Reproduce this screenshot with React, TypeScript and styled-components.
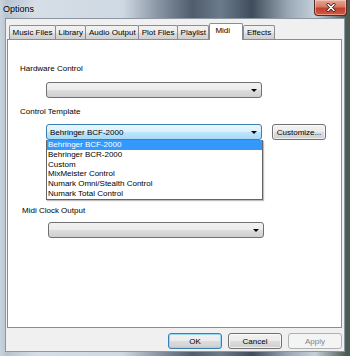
import styled, { createGlobalStyle, css } from "styled-components";

const GlobalStyle = createGlobalStyle`
  html, body {
    margin: 0;
    padding: 0;
    background: #5b6876;
  }
  * {
    box-sizing: border-box;
  }
`;

const Window = styled.div`
  width: 350px;
  height: 356px;
  display: flex;
  flex-direction: column;
  font-family: "Liberation Sans", Arial, sans-serif;
  font-size: 8px;
  color: #000;
  background: linear-gradient(
    90deg,
    #c9d4de 0%,
    #b7c3cf 2%,
    #d5dee7 10%,
    #cfd9e3 35%,
    #8996a4 45%,
    #4f5d6c 55%,
    #6c7b8b 63%,
    #3f4d5b 72%,
    #98a6b4 82%,
    #c5d0db 90%,
    #4d5a52 99%
  );
  overflow: hidden;
`;

const TitleBar = styled.div`
  height: 18px;
  display: flex;
  align-items: flex-start;
  justify-content: space-between;
  padding-left: 3px;
  padding-right: 3px;
`;

const Title = styled.span`
  font-family: "Liberation Sans", Arial, sans-serif;
  font-size: 9px;
  line-height: 18px;
  color: #000;
  text-shadow: 0 0 6px rgba(255, 255, 255, 0.9);
`;

const CloseButton = styled.div`
  width: 33px;
  height: 16px;
  border: 1px solid #5a2a24;
  border-top: none;
  border-radius: 0 0 4px 4px;
  background: linear-gradient(180deg, #e8a898 0%, #d67a66 45%, #c2402c 55%, #cf5a44 100%);
  display: flex;
  align-items: center;
  justify-content: center;
  box-shadow: inset 0 0 0 1px rgba(255, 220, 210, 0.5);
`;

const Frame = styled.div`
  flex: 1;
  display: flex;
  padding: 0 5px 4px 5px;
`;

const Client = styled.div`
  flex: 1;
  background: #f0f0f0;
  border: 1px solid #8c97a3;
  display: flex;
  flex-direction: column;
  padding: 4px 2px 0 1px;
`;

const TabStrip = styled.div`
  display: flex;
  align-items: flex-end;
  height: 16px;
  padding-left: 2px;
  position: relative;
  z-index: 1;
`;

const Tab = styled.div<{ $active?: boolean }>`
  height: 14px;
  padding: 0 2.5px;
  margin-right: -1px;
  display: flex;
  align-items: center;
  border: 1px solid #898c95;
  border-bottom: none;
  border-radius: 2px 2px 0 0;
  background: linear-gradient(180deg, #f2f2f2 0%, #ebebeb 50%, #dddddd 51%, #cfcfcf 100%);
  white-space: nowrap;
  ${(p) =>
    p.$active &&
    css`
      width: 34px;
      height: 17px;
      margin-bottom: -1px;
      background: #ffffff;
      padding: 2px 0 0 5px;
      align-items: flex-start;
      margin-left: 1px;
      margin-right: 0;
    `}
`;

const Panel = styled.div`
  height: 289px;
  background: #ffffff;
  border: 1px solid #898c95;
  display: flex;
  flex-direction: column;
  padding: 0 0 0 12px;
`;

const Label = styled.div<{ $top: number; $indent?: number }>`
  margin-top: ${(p) => p.$top}px;
  margin-left: ${(p) => p.$indent ?? 0}px;
  height: 10px;
  line-height: 10px;
`;

const Row = styled.div<{ $top: number; $indent?: number }>`
  margin-top: ${(p) => p.$top}px;
  margin-left: ${(p) => p.$indent ?? 26}px;
  display: flex;
  align-items: center;
  gap: 10px;
  position: relative;
`;

const Combo = styled.div<{ $focused?: boolean }>`
  width: 216px;
  height: 16px;
  border: 1px solid #707070;
  border-radius: 3px;
  background: linear-gradient(180deg, #f2f2f2 0%, #ebebeb 50%, #dddddd 51%, #cfcfcf 100%);
  display: flex;
  align-items: center;
  justify-content: space-between;
  padding: 0 4px 0 3px;
  ${(p) =>
    p.$focused &&
    css`
      border-color: #3c7fb1;
      background: linear-gradient(180deg, #eaf6fd 0%, #d9f0fc 50%, #bee6fd 51%, #a7d9f5 100%);
    `}
`;

const Arrow = styled.span`
  width: 0;
  height: 0;
  border-left: 3px solid transparent;
  border-right: 3px solid transparent;
  border-top: 3px solid #000;
  margin-top: 1px;
`;

const DropList = styled.div`
  position: absolute;
  left: 0;
  top: 16px;
  width: 217px;
  height: 60px;
  background: #ffffff;
  border: 1px solid #646464;
  border-top: none;
  box-shadow: 1px 1px 1px rgba(0, 0, 0, 0.25);
  z-index: 2;
  display: flex;
  flex-direction: column;
`;

const Item = styled.div<{ $selected?: boolean }>`
  height: 9.8px;
  line-height: 10px;
  padding-left: 1px;
  white-space: nowrap;
  ${(p) =>
    p.$selected &&
    css`
      background: #3399ff;
      color: #ffffff;
    `}
`;

const Button = styled.div<{ $variant?: "default" | "disabled" }>`
  width: 54px;
  height: 16px;
  border: 1px solid #707070;
  border-radius: 3px;
  background: linear-gradient(180deg, #f2f2f2 0%, #ebebeb 50%, #dddddd 51%, #cfcfcf 100%);
  display: flex;
  align-items: center;
  justify-content: center;
  box-shadow: inset 0 0 0 1px rgba(255, 255, 255, 0.7);
  ${(p) =>
    p.$variant === "default" &&
    css`
      border-color: #3c7fb1;
      box-shadow: inset 0 0 0 1px #9ad4f3;
    `}
  ${(p) =>
    p.$variant === "disabled" &&
    css`
      border-color: #adb2b5;
      background: #f4f4f4;
      color: #838383;
      box-shadow: none;
    `}
`;

const Footer = styled.div`
  display: flex;
  justify-content: flex-end;
  gap: 6px;
  margin-top: 5px;
`;

const tabs = ["Music Files", "Library", "Audio Output", "Plot Files", "Playlist", "Midi", "Effects"];
const templates = [
  "Behringer BCF-2000",
  "Behringer BCR-2000",
  "Custom",
  "MixMeister Control",
  "Numark Omni/Stealth Control",
  "Numark Total Control",
];

function App() {
  return (
    <>
      <GlobalStyle />
      <Window>
        <TitleBar>
          <Title>Options</Title>
          <CloseButton>
            <svg width="10" height="9" viewBox="0 0 10 9">
              <path d="M2 1.5 L8 7.5 M8 1.5 L2 7.5" stroke="#3a1510" strokeWidth="3" strokeLinecap="round" />
              <path d="M2 1.5 L8 7.5 M8 1.5 L2 7.5" stroke="#ffffff" strokeWidth="1.6" strokeLinecap="round" />
            </svg>
          </CloseButton>
        </TitleBar>
        <Frame>
          <Client>
            <TabStrip>
              {tabs.map((t) => (
                <Tab key={t} $active={t === "Midi"}>
                  {t}
                </Tab>
              ))}
            </TabStrip>
            <Panel>
              <Label $top={24}>Hardware Control</Label>
              <Row $top={8}>
                <Combo>
                  <span />
                  <Arrow />
                </Combo>
              </Row>
              <Label $top={9}>Control Template</Label>
              <Row $top={7}>
                <Combo $focused>
                  <span>Behringer BCF-2000</span>
                  <Arrow />
                </Combo>
                <Button>Customize...</Button>
                <DropList>
                  {templates.map((t, i) => (
                    <Item key={t} $selected={i === 0}>
                      {t}
                    </Item>
                  ))}
                </DropList>
              </Row>
              <Label $top={66} $indent={2}>
                Midi Clock Output
              </Label>
              <Row $top={6} $indent={28}>
                <Combo>
                  <span />
                  <Arrow />
                </Combo>
              </Row>
            </Panel>
            <Footer>
              <Button $variant="default">OK</Button>
              <Button>Cancel</Button>
              <Button $variant="disabled">Apply</Button>
            </Footer>
          </Client>
        </Frame>
      </Window>
    </>
  );
}

export default App;
